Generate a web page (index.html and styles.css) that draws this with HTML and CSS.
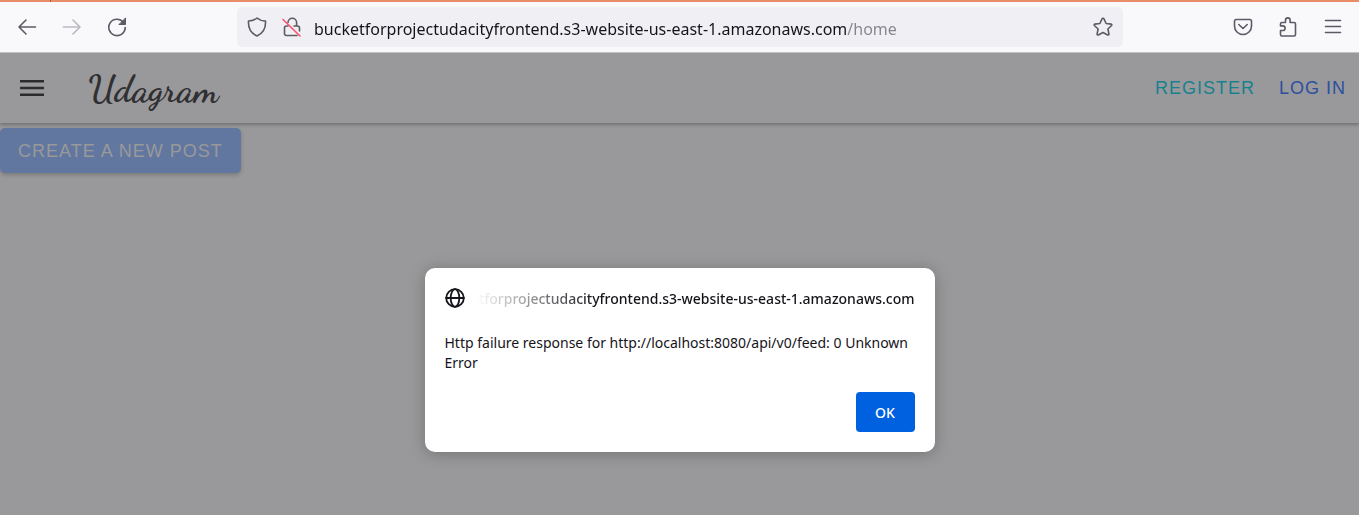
FILE: index.html
```html
<!DOCTYPE html>
<html lang="en">
<head>
<meta charset="utf-8">
<meta name="viewport" content="width=device-width, initial-scale=1">
<title>Udagram</title>
<link rel="stylesheet" href="styles.css">
</head>
<body>
<div class="tabstrip"></div>
<header class="toolbar">
  <nav class="nav-buttons" aria-label="Browser navigation">
    <button class="tool" aria-label="Back"><svg viewBox="0 0 20 20"><path d="M18.5 10H2M9 3L2 10l7 7"/></svg></button>
    <button class="tool tool-off" aria-label="Forward" disabled><svg viewBox="0 0 20 20"><path d="M1.500 10H18M11 3l7 7-7 7"/></svg></button>
    <button class="tool" aria-label="Reload"><svg viewBox="0 0 20 20"><path d="M16.400 5.300A8.200 8.200 0 1 0 18.200 10.500"/><path class="solid" d="M18.500 1.300v6.200h-6.200z"/></svg></button>
  </nav>
  <div class="urlbar">
    <svg class="icon" viewBox="0 0 20 20"><path d="M10 1C7.500 3.200 4.500 3.900 1.500 4c-.4 6 1.500 12 8.500 15 7-3 8.900-9 8.500-15-3-.1-6-.8-8.500-3z"/></svg>
    <svg class="icon icon-lock" viewBox="0 0 20 20"><path d="M6 5.500a4.300 4.300 0 0 1 8.600 0V9M12 9h3.500q2 0 2 2v3M6 9H4.500q-2 0-2 2v5.500q0 2 2 2H15"/><path class="slash" d="M1 2.500l17 16.500"/></svg>
    <input class="url" type="text" aria-label="Address" value="bucketforprojectudacityfrontend.s3-website-us-east-1.amazonaws.com/home" spellcheck="false">
    <button class="tool" aria-label="Bookmark this page"><svg viewBox="0 0 20 20"><path d="M10 1.200q.7 0 1 .7l2.100 4.600 5 .6q1.200.4.500 1.400l-3.700 3.500 1 5q0 1.300-1.200 1L10 15.500 5.300 18q-1.200.3-1.200-1l1-5L1.400 8.500q-.7-1 .5-1.400l5-.6L9 1.900q.3-.7 1-.7z"/></svg></button>
  </div>
  <div class="actions">
    <button class="tool" aria-label="Save to Pocket"><svg viewBox="0 0 20 20"><path d="M3.200 2.500h13.600q1.700 0 1.700 1.700V9a8.500 8.500 0 0 1-17 0V4.200q0-1.700 1.700-1.700zM5.800 7.500L10 11.500l4.200-4"/></svg></button>
    <button class="tool" aria-label="Extensions"><svg viewBox="0 0 20 20"><path d="M7.500 5.500V3.200a2.300 2.300 0 0 1 4.600 0v2.300H16q1.500 0 1.500 1.500v10.500q0 1.500-1.500 1.500H4q-1.500 0-1.500-1.500v-4h2.300a2.300 2.300 0 0 0 0-4.600H2.500V7q0-1.500 1.500-1.500z"/></svg></button>
    <button class="tool" aria-label="Open menu"><svg viewBox="0 0 20 20"><path d="M2.500 3.500h15M2.500 9.500h15M2.500 15.500h15"/></svg></button>
  </div>
</header>
<div class="page">
  <header class="app-bar">
    <button class="menu" aria-label="Menu"><svg viewBox="0 0 24 16"><path d="M0 1.300h24M0 8h24M0 14.700h24"/></svg></button>
    <h1 class="brand">Udagram</h1>
    <nav class="account">
      <a class="register" href="#register">REGISTER</a>
      <a class="login" href="#login">LOG IN</a>
    </nav>
  </header>
  <main class="feed">
    <button class="create">CREATE A NEW POST</button>
  </main>
  <div class="modal-layer">
    <section class="alert" role="alertdialog" aria-modal="true" aria-labelledby="origin" aria-describedby="message">
      <div class="alert-head">
        <svg class="globe" viewBox="0 0 20 20"><circle cx="10" cy="10" r="8.800"/><ellipse cx="10" cy="10" rx="4.300" ry="8.800"/><path d="M1.200 10h17.600"/></svg>
        <div class="origin" id="origin"><span>bucketforprojectudacityfrontend.s3-website-us-east-1.amazonaws.com</span></div>
      </div>
      <p class="message" id="message">Http failure response for http://localhost:8080/api/v0/feed: 0 Unknown Error</p>
      <button class="ok">OK</button>
    </section>
  </div>
</div>
</body>
</html>
```
FILE: styles.css
```css
* { box-sizing: border-box; }
body {
  margin: 0;
  min-height: 100vh;
  display: flex;
  flex-direction: column;
  font-family: "Segoe UI", "Noto Sans", "Open Sans", sans-serif;
  color: #15141a;
}
button {
  border: 0;
  padding: 0;
  background: none;
  font: inherit;
  cursor: pointer;
}
svg {
  display: block;
  fill: none;
  stroke: #5b5b66;
  stroke-width: 1.6;
  stroke-linecap: round;
  stroke-linejoin: round;
}

/* Browser chrome */
.tabstrip {
  height: 2px;
  background: linear-gradient(90deg, #e98d68 50px, #a0614c 50px 51px, #e98d68 51px);
}
.toolbar {
  display: flex;
  align-items: center;
  height: 51px;
  padding: 0 16px 0 17px;
  background: #f9f9fb;
  border-bottom: 1px solid #c4c4c8;
}
.nav-buttons { display: flex; gap: 25px; width: 220px; }
.tool svg, .icon { width: 20px; height: 20px; }
.tool-off { opacity: 0.4; }
.tool .solid { fill: #5b5b66; stroke-width: 1; }
.urlbar {
  flex: 1;
  display: flex;
  align-items: center;
  height: 40px;
  padding: 0 10px;
  border-radius: 5px;
  background: #f0f0f4;
}
.icon { flex: none; }
.icon-lock { margin: 0 12px 0 15px; }
.slash { stroke: #ff4f6f; }
.url {
  flex: 1;
  min-width: 0;
  height: 32px;
  padding: 4px 0 0;
  border: 0;
  outline: 0;
  font-family: inherit;
  font-size: 16px;
  color: transparent;
  background: linear-gradient(90deg, #15141a 533px, #84848b 533px);
  -webkit-background-clip: text;
  background-clip: text;
}
.actions { display: flex; gap: 25px; margin-left: 110px; }

/* Application */
.page {
  position: relative;
  flex: 1;
  background: #99999b;
}
.app-bar {
  display: flex;
  align-items: center;
  height: 70px;
  padding: 0 13px 0 20px;
  box-shadow: 0 2px 3px rgba(0, 0, 0, 0.25);
}
.menu { width: 24px; margin-right: 44px; }
.menu svg { width: 24px; stroke: #2c2c2e; stroke-width: 2.4; stroke-linecap: butt; }
.brand {
  margin: 0;
  padding-top: 2px;
  font: 700 37px/48px "Dancing Script", "Liberation Serif", cursive;
  color: #303032;
}
.account { display: flex; gap: 24px; margin-left: auto; }
.account a, .create {
  font: 18px/24px "Liberation Sans", Arial, sans-serif;
  letter-spacing: 1px;
  text-decoration: none;
}
.register { color: #168290; }
.login { color: #2c50a0; }
.feed { padding-top: 5px; }
.create {
  height: 45px;
  padding: 0 18px;
  border-radius: 5px;
  background: #62779f;
  color: #99999a;
  box-shadow: 0 2px 4px rgba(0, 0, 0, 0.2);
}

/* Alert */
.modal-layer {
  position: absolute;
  inset: 0;
  display: flex;
  justify-content: center;
  align-items: flex-start;
  padding-top: 215px;
}
.alert {
  display: flex;
  flex-direction: column;
  width: 510px;
  padding: 20px;
  border-radius: 10px;
  background: #fff;
  box-shadow: 0 2px 16px rgba(0, 0, 0, 0.25);
}
.alert-head { display: flex; align-items: center; gap: 11px; height: 20px; }
.globe { flex: none; width: 20px; height: 20px; stroke: #15141a; stroke-width: 1.8; }
.origin {
  flex: 1;
  min-width: 0;
  display: flex;
  justify-content: flex-end;
  overflow: hidden;
  font-size: 14px;
  font-weight: 500;
  white-space: nowrap;
  -webkit-mask-image: linear-gradient(90deg, transparent, #000 120px);
  mask-image: linear-gradient(90deg, transparent, #000 120px);
}
.message { margin: 25px 0 19px; font-size: 14px; line-height: 20px; }
.ok {
  align-self: flex-end;
  width: 59px;
  height: 40px;
  border-radius: 4px;
  background: #0061e0;
  color: #fff;
  font-size: 14px;
  font-weight: 500;
}
```
